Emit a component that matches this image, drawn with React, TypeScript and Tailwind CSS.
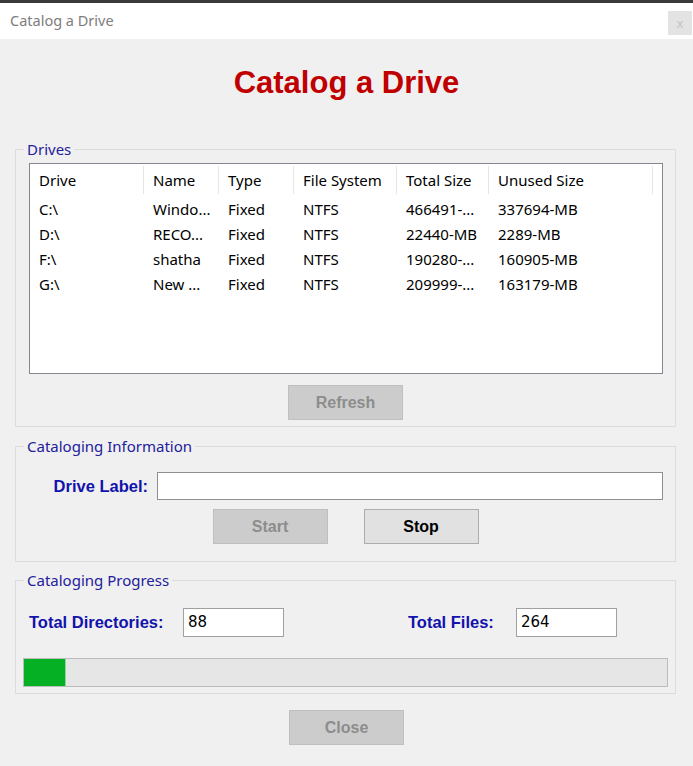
import React from 'react';

const drives = [
  { drive: 'C:\\', name: 'Windo...', type: 'Fixed', fs: 'NTFS', total: '466491-...', unused: '337694-MB' },
  { drive: 'D:\\', name: 'RECO...', type: 'Fixed', fs: 'NTFS', total: '22440-MB', unused: '2289-MB' },
  { drive: 'F:\\', name: 'shatha', type: 'Fixed', fs: 'NTFS', total: '190280-...', unused: '160905-MB' },
  { drive: 'G:\\', name: 'New ...', type: 'Fixed', fs: 'NTFS', total: '209999-...', unused: '163179-MB' },
];

const columns = [
  { label: 'Drive', key: 'drive', width: 'w-[114px]' },
  { label: 'Name', key: 'name', width: 'w-[75px]' },
  { label: 'Type', key: 'type', width: 'w-[75px]' },
  { label: 'File System', key: 'fs', width: 'w-[103px]' },
  { label: 'Total Size', key: 'total', width: 'w-[92px]' },
  { label: 'Unused Size', key: 'unused', width: 'w-[164px]' },
] as const;

const uiFont = "font-['Noto_Sans','Open_Sans',sans-serif]";
const boldFont = "font-['Liberation_Sans',Arial,sans-serif] font-bold";

const GroupBox: React.FC<{ title: string; className?: string; children: React.ReactNode }> = ({ title, className = '', children }) => (
  <fieldset className={`ml-[15px] w-[661px] border border-[#dcdcdc] ${className}`}>
    <legend className={`ml-[8px] px-[3px] text-[15px] leading-[18px] text-[#23209c] ${uiFont}`}>{title}</legend>
    {children}
  </fieldset>
);

const WinButton: React.FC<{ label: string; disabled?: boolean }> = ({ label, disabled }) => (
  <button
    type="button"
    className={`h-[35px] w-[115px] border text-[16px] ${boldFont} ${
      disabled ? 'bg-[#cccccc] border-[#bfbfbf] text-[#8d8d8d]' : 'bg-[#e1e1e1] border-[#adadad] text-black'
    }`}
  >
    {label}
  </button>
);

export default function App() {
  return (
    <div className="w-[693px] h-[766px] bg-[#f0f0f0] overflow-hidden">
      <div className="h-[3px] bg-[#3a3a3a]" />
      <div className="h-[36px] bg-white flex justify-between pl-[10px] pr-[1px]">
        <span className={`self-center text-[14.5px] text-[#7d7d7d] ${uiFont}`}>Catalog a Drive</span>
        <div className="self-end mb-[4px] w-[24px] h-[24px] bg-[#e3e3e3] flex items-center justify-center text-[13px] leading-none text-[#c4c4c4] font-['Liberation_Sans',sans-serif]">
          x
        </div>
      </div>

      <div className="pt-[24px]">
        <h1 className={`h-[40px] leading-[40px] text-center text-[31px] text-[#c00000] ${boldFont}`}>Catalog a Drive</h1>
      </div>

      <GroupBox title="Drives" className="mt-[37px] pb-[6px]">
        <div className="ml-[13px] mt-[5px] w-[634px] h-[211px] border border-[#828790] bg-white">
          <div className={`flex h-[32px] items-center text-[15px] text-black ${uiFont}`}>
            {columns.map((c) => (
              <div key={c.key} className={`${c.width} h-[28px] flex items-center pl-[9px] border-r border-[#e5e5e5]`}>
                {c.label}
              </div>
            ))}
          </div>
          <div className="pt-[1px]">
            {drives.map((d) => (
              <div key={d.drive} className={`flex h-[25px] items-center text-[15px] text-black ${uiFont}`}>
                {columns.map((c) => (
                  <div key={c.key} className={`${c.width} pl-[9px] whitespace-nowrap`}>
                    {d[c.key]}
                  </div>
                ))}
              </div>
            ))}
          </div>
        </div>
        <div className="mt-[11px] flex justify-center">
          <WinButton label="Refresh" disabled />
        </div>
      </GroupBox>

      <GroupBox title="Cataloging Information" className="mt-[10px] pb-[17px]">
        <div className="pt-[17px] flex items-center">
          <label className={`w-[132px] text-right text-[16.5px] text-[#1212ac] ${boldFont}`}>Drive Label:</label>
          <input
            type="text"
            className="ml-[9px] w-[506px] h-[28px] bg-white border border-[#8f8f8f] outline-none"
          />
        </div>
        <div className="mt-[9px] flex justify-center gap-[36px]">
          <WinButton label="Start" disabled />
          <WinButton label="Stop" />
        </div>
      </GroupBox>

      <GroupBox title="Cataloging Progress" className="mt-[9px] pb-[6px]">
        <div className="pt-[19px] pl-[13px] flex items-center">
          <span className={`w-[154px] text-[16.5px] text-[#1212ac] ${boldFont}`}>Total Directories:</span>
          <div className="w-[101px] h-[29px] bg-white border border-[#a0a0a0] pl-[4px] flex items-center text-[15px] text-black font-['DejaVu_Sans',sans-serif]">
            88
          </div>
          <span className={`ml-[124px] w-[108px] text-[16.5px] text-[#1212ac] ${boldFont}`}>Total Files:</span>
          <div className="w-[101px] h-[29px] bg-white border border-[#a0a0a0] pl-[4px] flex items-center text-[15px] text-black font-['DejaVu_Sans',sans-serif]">
            264
          </div>
        </div>
        <div className="mt-[21px] mx-[7px] h-[29px] bg-[#e6e6e6] border border-[#bcbcbc] flex">
          <div className="w-[42px] bg-[#06b025] border-r border-[#8fd69f]" />
        </div>
      </GroupBox>

      <div className="mt-[16px] flex justify-center">
        <WinButton label="Close" disabled />
      </div>
    </div>
  );
}
